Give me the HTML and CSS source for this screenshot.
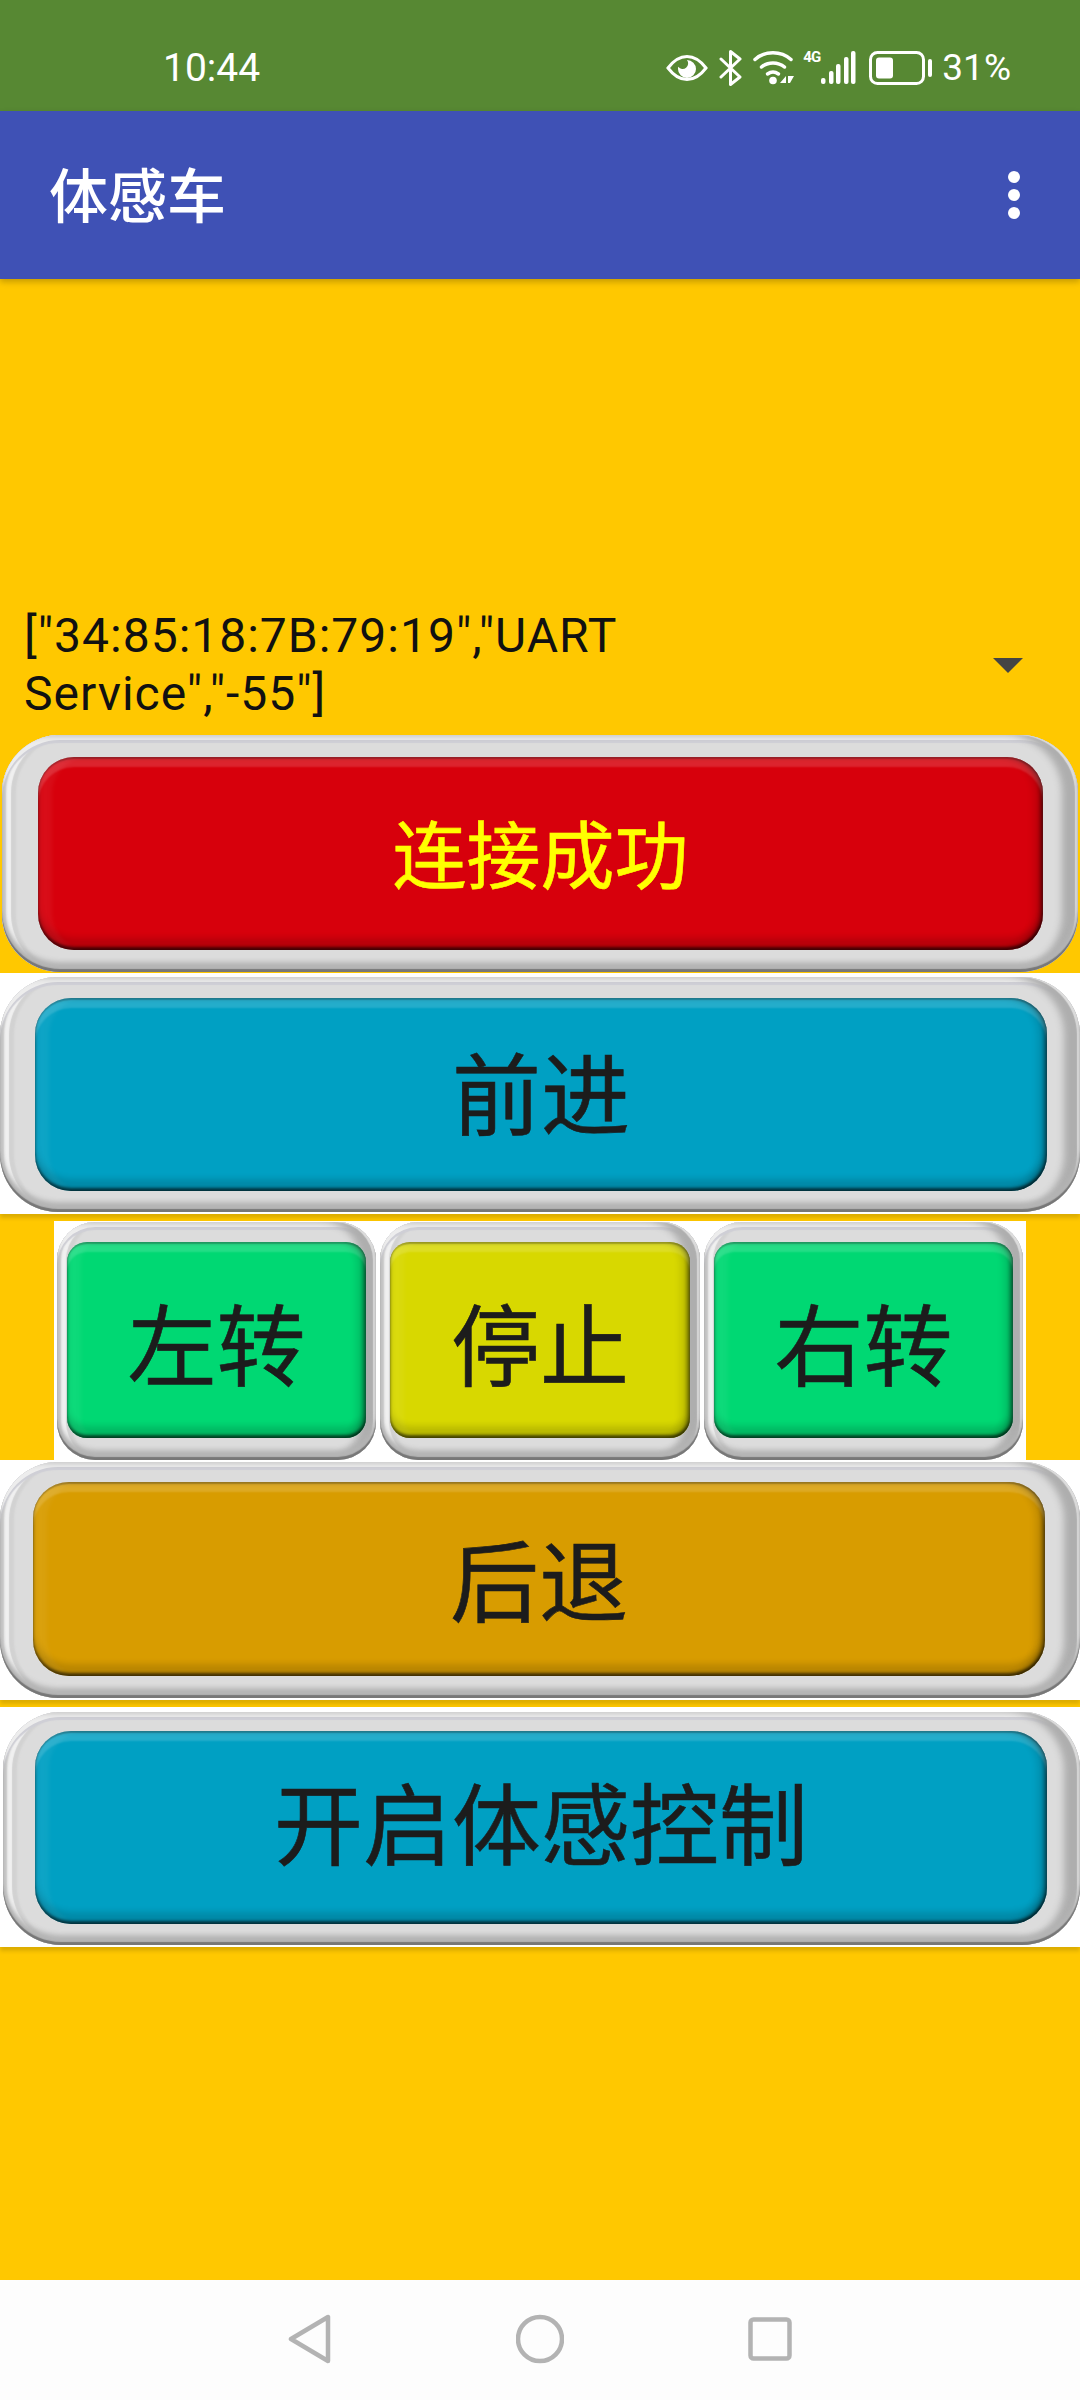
FILE: index.html

```html
<!DOCTYPE html>
<html lang="zh-CN">

<head>
    <meta charset="UTF-8">
    <meta name="viewport" content="width=device-width, initial-scale=1.0">
    <title>体感车</title>
    <link rel="stylesheet" href="styles.css">
</head>

<body>
    <div class="statusBar">
        <span class="time">10:44</span>
        <div class="statusIcons">
            <svg class="icoEye" width="42" height="28" viewBox="0 0 42 28">
                <path d="M2 14C8 6 14 2.500 21 2.500S34 6 40 14C34 22 28 25.500 21 25.500S8 22 2 14Z" fill="none" stroke="#fff" stroke-width="3"/>
                <path d="M21 5a9 9 0 1 1 -9 9c0 -.8 .1 -1.500 .3 -2.200a5.500 5.500 0 0 0 8.700 -6.800Z" fill="#fff" transform="translate(0 1)"/>
            </svg>
            <svg class="icoBt" width="23" height="36" viewBox="0 0 23 36">
                <path d="M2 9L21 27L11.500 34.500V1.500L21 9L2 27" fill="none" stroke="#fff" stroke-width="3" stroke-linejoin="round" stroke-linecap="round"/>
            </svg>
            <svg class="icoWifi" width="42" height="34" viewBox="0 0 42 34">
                <g fill="none" stroke="#fff" stroke-width="3.500" stroke-linecap="round">
                    <path d="M2 8.500C12 -.5 28 -.5 38 8.500"/>
                    <path d="M8.500 16C15 10.500 25 10.500 31.500 16"/>
                    <path d="M14.500 23C18 20.500 22 20.500 25.500 23"/>
                </g>
                <circle cx="20" cy="29.500" r="3.800" fill="#fff"/>
                <path d="M33 25v7h-6zM35 25l6 0 -4 7h-2z" fill="#fff"/>
            </svg>
            <div class="signal">
                <span class="netType">4G</span>
                <svg width="36" height="33" viewBox="0 0 36 33">
                    <g fill="#fff">
                        <rect x="1" y="27" width="4.500" height="6" rx="2"/>
                        <rect x="9" y="20" width="4.500" height="13" rx="2"/>
                        <rect x="16" y="13" width="4.500" height="20" rx="2"/>
                        <rect x="24" y="6" width="4.500" height="27" rx="2"/>
                        <rect x="31" y="0" width="4.500" height="33" rx="2"/>
                    </g>
                </svg>
            </div>
            <svg class="icoBattery" width="64" height="34" viewBox="0 0 64 34">
                <rect x="1.500" y="1.500" width="53" height="31" rx="7" fill="none" stroke="#fff" stroke-width="3"/>
                <rect x="7" y="6.500" width="17" height="21" rx="3" fill="#fff"/>
                <rect x="59" y="8" width="4" height="18" rx="2" fill="#fff"/>
            </svg>
            <span class="percent">31%</span>
        </div>
    </div>

    <div class="appBar">
        <span class="title">体感车</span>
        <div class="moreBtn"><i></i><i></i><i></i></div>
    </div>

    <div class="content">
        <div class="spinner">
            <div class="spinnerText">["34:85:18:7B:79:19","UART Service","-55"]</div>
            <div class="spinnerArrow"></div>
        </div>

        <div class="btnBox btnConnect">
            <div class="rim">
                <div class="face red">连接成功</div>
            </div>
        </div>
        <div class="btnBox btnForward">
            <div class="rim">
                <div class="face blue">前进</div>
            </div>
        </div>

        <div class="turnRow">
            <div class="rim small">
                <div class="face green">左转</div>
            </div>
            <div class="rim small">
                <div class="face lime">停止</div>
            </div>
            <div class="rim small">
                <div class="face green">右转</div>
            </div>
        </div>

        <div class="btnBox btnBack">
            <div class="rim">
                <div class="face amber">后退</div>
            </div>
        </div>
        <div class="btnBox btnSense">
            <div class="rim">
                <div class="face blue">开启体感控制</div>
            </div>
        </div>
    </div>

    <div class="navBar">
        <svg width="44" height="50" viewBox="0 0 44 50">
            <path d="M40 3V47L3 25Z" fill="none" stroke="#b3b3b3" stroke-width="4.500" stroke-linejoin="round"/>
        </svg>
        <svg width="48" height="50" viewBox="0 0 48 50">
            <circle cx="24" cy="25" r="22" fill="none" stroke="#b3b3b3" stroke-width="4.500"/>
        </svg>
        <svg width="44" height="44" viewBox="0 0 44 44">
            <rect x="2.500" y="2.500" width="39" height="39" rx="3" fill="none" stroke="#b3b3b3" stroke-width="4.500"/>
        </svg>
    </div>
</body>

</html>
```

FILE: styles.css

```css
* {
    margin: 0;
    padding: 0;
    box-sizing: border-box;
}

html,
body {
    height: 100%;
}

body {
    display: flex;
    flex-direction: column;
    background: #ffc800;
    font-family: "Noto Sans CJK SC", Roboto, sans-serif;
    overflow: hidden;
}

/* status bar */
.statusBar {
    height: 111px;
    flex: none;
    display: flex;
    align-items: center;
    justify-content: space-between;
    padding: 24px 69px 0 163px;
    background: #578833;
    color: #fff;
    font-family: Roboto, sans-serif;
    font-size: 37px;
}

.time {
    font-size: 39px;
}

.statusIcons {
    display: flex;
    align-items: center;
}

.icoBt {
    margin-left: 11px;
}

.icoWifi {
    margin-left: 11px;
}

.signal {
    display: flex;
    align-items: flex-end;
    position: relative;
    width: 53px;
    height: 33px;
    margin-left: 8px;
    justify-content: flex-end;
}

.netType {
    position: absolute;
    left: 0;
    top: -3px;
    font-size: 15px;
    font-weight: 700;
    line-height: 18px;
    letter-spacing: -1px;
}

.icoBattery {
    margin-left: 13px;
}

.percent {
    margin-left: 9px;
}

/* app bar */
.appBar {
    height: 168px;
    flex: none;
    display: flex;
    align-items: center;
    justify-content: space-between;
    padding: 0 60px 0 49px;
    background: #3f51b5;
    box-shadow: 0 3px 6px rgba(0, 0, 0, .22);
    position: relative;
}

.title {
    padding-bottom: 6px;
    color: #fff;
    font-size: 59px;
    font-weight: 500;
}

.moreBtn {
    display: flex;
    flex-direction: column;
    gap: 6px;
}

.moreBtn i {
    width: 12px;
    height: 12px;
    border-radius: 50%;
    background: #fff;
}

/* main area */
.content {
    flex: 1;
    display: flex;
    flex-direction: column;
}

.spinner {
    height: 456px;
    flex: none;
    display: flex;
    align-items: flex-end;
    justify-content: space-between;
    padding: 0 57px 12px 24px;
}

.spinnerText {
    width: 640px;
    color: #111;
    font-family: Roboto, "Noto Sans CJK SC", sans-serif;
    font-size: 48px;
    line-height: 58px;
    letter-spacing: 1px;
}

.spinnerArrow {
    margin-bottom: 50px;
    border-left: 15px solid transparent;
    border-right: 15px solid transparent;
    border-top: 15px solid #444;
}

/* image style 3d buttons */
.btnBox {
    display: flex;
    flex: none;
    background: #fff;
    box-shadow: 0 4px 4px rgba(0, 0, 0, .14);
}

.rim {
    flex: 1;
    display: flex;
    border-radius: 58px;
    background: #dcdcdc;
    box-shadow:
        inset 0 -3px 1px #777,
        inset 0 -10px 5px #b4b4b4,
        inset -3px 0 1px #dedede,
        inset -16px 0 7px #aeaeae,
        inset 0 5px 0 #ededed,
        inset 0 8px 1px #cfcfd6,
        inset 4px 0 2px #c8c8c8,
        inset 9px 0 1px #f0f0f0,
        inset 14px 0 2px #d2d2d2;
}

.face {
    flex: 1;
    display: flex;
    align-items: center;
    justify-content: center;
    border-radius: 36px;
    color: #1c1c1c;
    font-size: 89px;
    line-height: 1;
    -webkit-text-stroke: .6px currentColor;
    box-shadow:
        inset 0 2px 1px rgba(0, 0, 0, .16),
        inset 0 10px 2px rgba(255, 255, 255, .14),
        inset -3px 0 4px rgba(0, 0, 0, .42),
        inset -10px 0 6px rgba(0, 0, 0, .1),
        inset 0 -3px 3px rgba(0, 0, 0, .55),
        inset 0 -12px 6px rgba(0, 0, 0, .14),
        inset 14px 0 4px rgba(255, 255, 255, .05);
}

.red {
    background: #d7000c;
}

.blue {
    background: #00a0c3;
}

.green {
    background: #00d873;
}

.lime {
    background: #d8d800;
}

.amber {
    background: #d89c00;
}

.btnConnect {
    height: 238px;
    padding: 0 2px 1px 2px;
    background: #ffc800;
    box-shadow: none;
}

.btnConnect .rim {
    padding: 22px 35px 22px 36px;
}

.btnConnect .face {
    padding-bottom: 6px;
    color: #ff0;
    font-size: 74px;
}

.btnForward {
    height: 241px;
    padding: 4px 0 2px;
}

.btnForward .rim {
    padding: 21px 33px 21px 35px;
}

.btnForward .face {
    padding-bottom: 10px;
}

.turnRow {
    width: 972px;
    height: 239px;
    flex: none;
    margin: 7px auto 0;
    display: grid;
    grid-template-columns: 319px 320px 319px;
    gap: 4px;
    padding: 1px 3px 0;
    background: #fff;
}

.rim.small {
    border-radius: 38px;
    padding: 20px 10px 22px;
}

.small .face {
    border-radius: 20px;
}

.btnBack {
    height: 240px;
    padding: 2px 0 2px;
}

.btnBack .rim {
    padding: 20px 35px 22px 33px;
}

.btnBack .face {
    padding-bottom: 6px;
}

.btnSense {
    height: 240px;
    margin-top: 7px;
    padding: 5px 0 2px 3px;
}

.btnSense .rim {
    padding: 19px 33px 21px 32px;
}

.btnSense .face {
    padding-bottom: 16px;
}

/* bottom nav */
.navBar {
    height: 120px;
    flex: none;
    display: flex;
    align-items: center;
    justify-content: center;
    gap: 184px;
    padding-bottom: 3px;
    background: #fdfdfd;
}
```
